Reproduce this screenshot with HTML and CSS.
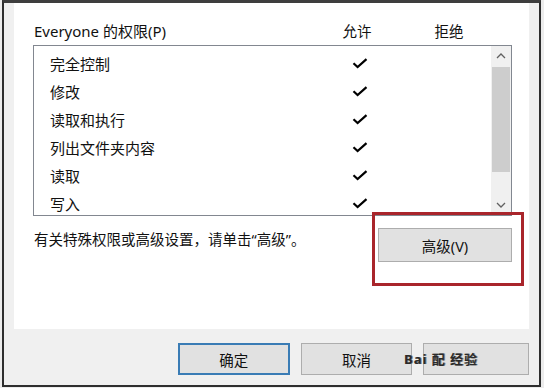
FILE: index.html
```html
<!DOCTYPE html>
<html lang="zh-CN">
<head>
<meta charset="utf-8">
<title>Everyone 的权限</title>
<link rel="stylesheet" href="styles.css">
</head>
<body>
<div class="window">
  <div class="panel">
    <div class="perm-head">
      <span class="perm-label">Everyone 的权限(P)</span>
      <span class="col">允许</span>
      <span class="col col-deny">拒绝</span>
    </div>
    <div class="listbox">
      <div class="rows">
        <div class="row"><span class="name">完全控制</span><span class="check"><svg width="16" height="11" viewBox="0 0 16 11"><path d="M1.5 5.2 L5.6 9 L14.5 1.2" fill="none" stroke="#000" stroke-width="2.2"/></svg></span></div>
        <div class="row"><span class="name">修改</span><span class="check"><svg width="16" height="11" viewBox="0 0 16 11"><path d="M1.5 5.2 L5.6 9 L14.5 1.2" fill="none" stroke="#000" stroke-width="2.2"/></svg></span></div>
        <div class="row"><span class="name">读取和执行</span><span class="check"><svg width="16" height="11" viewBox="0 0 16 11"><path d="M1.5 5.2 L5.6 9 L14.5 1.2" fill="none" stroke="#000" stroke-width="2.2"/></svg></span></div>
        <div class="row"><span class="name">列出文件夹内容</span><span class="check"><svg width="16" height="11" viewBox="0 0 16 11"><path d="M1.5 5.2 L5.6 9 L14.5 1.2" fill="none" stroke="#000" stroke-width="2.2"/></svg></span></div>
        <div class="row"><span class="name">读取</span><span class="check"><svg width="16" height="11" viewBox="0 0 16 11"><path d="M1.5 5.2 L5.6 9 L14.5 1.2" fill="none" stroke="#000" stroke-width="2.2"/></svg></span></div>
        <div class="row"><span class="name">写入</span><span class="check"><svg width="16" height="11" viewBox="0 0 16 11"><path d="M1.5 5.2 L5.6 9 L14.5 1.2" fill="none" stroke="#000" stroke-width="2.2"/></svg></span></div>
      </div>
      <div class="scrollbar">
        <div class="sb-btn"><svg width="10" height="6" viewBox="0 0 10 6"><path d="M1 5 L5 1 L9 5" fill="none" stroke="#606060" stroke-width="1.3"/></svg></div>
        <div class="sb-thumb"></div>
        <div class="sb-track"></div>
        <div class="sb-btn"><svg width="10" height="6" viewBox="0 0 10 6"><path d="M1 1 L5 5 L9 1" fill="none" stroke="#606060" stroke-width="1.3"/></svg></div>
      </div>
    </div>
    <div class="advanced-row">
      <span class="note">有关特殊权限或高级设置，请单击“高级”。</span>
      <button class="btn btn-adv">高级(V)</button>
    </div>
    <div class="highlight"></div>
  </div>
  <div class="footer">
    <button class="btn btn-ok">确定</button>
    <button class="btn">取消</button>
    <button class="btn btn-apply"></button>
    <span class="watermark">Bai 配 经验</span>
  </div>
</div>
</body>
</html>
```

FILE: styles.css
```css
html, body {
  margin: 0;
  padding: 0;
}
body {
  width: 544px;
  height: 388px;
  overflow: hidden;
  background: #ececec;
  font-family: "Noto Sans", "Noto Sans CJK SC", sans-serif;
  color: #111;
}
.window {
  margin-left: 2px;
  width: 515px;
  height: 382px;
  padding: 0 10px;
  background: #f0f0f0;
  border: 2px solid #2e2e2e;
  border-top: 3px solid #3e3e3e;
  display: flex;
  flex-direction: column;
}
.panel {
  position: relative;
  background: #fff;
  height: 326px;
  flex: none;
}
.perm-head {
  display: flex;
  padding: 18px 0 0 20px;
  height: 20px;
  line-height: 20px;
  font-size: 15px;
}
.perm-label {
  width: 293px;
  flex: none;
}
.col {
  width: 60px;
  text-align: center;
  flex: none;
  font-size: 14.5px;
}
.col-deny {
  margin-left: 32px;
}
.listbox {
  box-sizing: border-box;
  margin: 4px 0 0 19px;
  width: 479px;
  height: 171px;
  border: 1px solid #828790;
  display: flex;
  overflow: hidden;
}
.rows {
  flex: 1;
  padding-top: 3px;
  overflow: hidden;
}
.row {
  display: flex;
  align-items: center;
  height: 28px;
  padding-left: 16px;
  font-size: 15px;
}
.name {
  width: 290px;
  flex: none;
}
.check {
  width: 40px;
  display: flex;
  justify-content: center;
  align-items: center;
}
.check svg {
  display: block;
}
.scrollbar {
  width: 20px;
  flex: none;
  display: flex;
  flex-direction: column;
  background: #f0f0f0;
}
.sb-btn {
  height: 20px;
  display: flex;
  align-items: center;
  justify-content: center;
}
.sb-thumb {
  margin: 1px 1px 0 1px;
  height: 105px;
  background: #cdcdcd;
}
.sb-track {
  flex: 1;
}
.advanced-row {
  display: flex;
  align-items: flex-start;
  padding: 11px 17px 0 20px;
}
.note {
  flex: 1;
  font-size: 14.5px;
  line-height: 22px;
  padding-top: 1px;
}
.btn {
  box-sizing: border-box;
  width: 112px;
  height: 32px;
  background: #e1e1e1;
  border: 1px solid #adadad;
  font-family: inherit;
  font-size: 14.5px;
  color: #111;
  padding: 0;
}
.btn-adv {
  width: 134px;
  height: 34px;
  flex: none;
  margin-top: 1px;
}
.highlight {
  position: absolute;
  left: 358px;
  top: 209px;
  width: 152px;
  height: 74px;
  box-sizing: border-box;
  border: 3px solid #a9252b;
}
.footer {
  position: relative;
  height: 56px;
  display: flex;
  gap: 11px;
  padding: 14px 0 0 164px;
  box-sizing: border-box;
}
.btn-ok {
  border: 2px solid #3a7cb5;
}
.btn-apply {
  width: 106px;
}
.watermark {
  position: absolute;
  left: 390px;
  top: 20px;
  font-size: 13px;
  font-weight: bold;
  color: #2a2a2a;
  letter-spacing: 1px;
  text-shadow: 1px 0 #888;
}
```
